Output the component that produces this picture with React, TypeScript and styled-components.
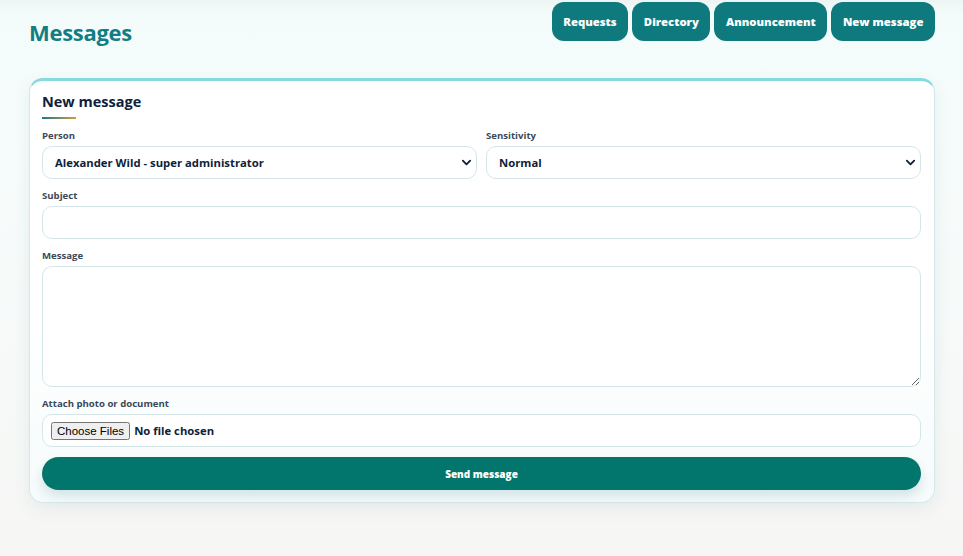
import styled, { createGlobalStyle } from 'styled-components';

const GlobalStyle = createGlobalStyle`
  html, body {
    margin: 0;
    padding: 0;
  }
  body {
    min-height: 556px;
    font-family: 'Open Sans', 'Noto Sans', sans-serif;
    background: linear-gradient(180deg, #ecf5f4 0px, #f3fbfb 14px, #f6fcfc 120px, #f6f7f5 556px);
    color: #0f1e3a;
  }
`;

const Page = styled.div`
  padding: 0 28px 0 29px;
  box-sizing: border-box;
  width: 963px;
  min-height: 556px;
`;

const Header = styled.div`
  display: flex;
  justify-content: space-between;
  align-items: flex-start;
  height: 78px;
`;

const Title = styled.h1`
  margin: 17px 0 0;
  font-size: 22px;
  font-weight: 700;
  color: #137d84;
  letter-spacing: -0.3px;
`;

const Actions = styled.div`
  display: flex;
  gap: 4px;
  padding-top: 2px;
`;

const ActionButton = styled.button`
  height: 39px;
  padding: 0 11.6px;
  border: none;
  border-radius: 12px;
  background: #0e7a7e;
  color: #fff;
  font-family: inherit;
  font-size: 11.3px;
  font-weight: 800;
  cursor: pointer;
`;

const Card = styled.div`
  box-sizing: border-box;
  border: 1px solid #d6e7e9;
  border-top: 3px solid #85dadf;
  border-radius: 14px;
  background: linear-gradient(180deg, #ffffff 0%, #ffffff 55%, #f6fbfc 100%);
  box-shadow: 0 6px 18px rgba(30, 80, 90, 0.08);
  padding: 11px 13px 12px 12px;
`;

const CardTitle = styled.h2`
  margin: 0;
  font-size: 14.5px;
  font-weight: 700;
  color: #0f1e3a;
  line-height: 20px;
`;

const TitleBar = styled.div`
  width: 34px;
  height: 2px;
  margin: 5px 0 10px;
  background: linear-gradient(90deg, #197e80, #d39a3e);
`;

const Form = styled.div`
  display: flex;
  flex-direction: column;
  gap: 10px;
`;

const Row = styled.div`
  display: grid;
  grid-template-columns: 1fr 1fr;
  gap: 9px;
`;

const Field = styled.label`
  display: flex;
  flex-direction: column;
  gap: 4px;
`;

const Label = styled.span`
  font-size: 9.6px;
  font-weight: 700;
  line-height: 13px;
  color: #3c4859;
`;

const SelectWrap = styled.div`
  position: relative;
`;

const inputBase = `
  box-sizing: border-box;
  width: 100%;
  border: 1px solid #d5e6e8;
  border-radius: 10px;
  background: #fff;
  font-family: inherit;
  font-size: 11.3px;
  font-weight: 700;
  color: #0f1e3a;
  outline: none;
`;

const Select = styled.select`
  ${inputBase}
  height: 33px;
  padding: 0 30px 0 12px;
  appearance: none;
`;

const Chevron = styled.svg`
  position: absolute;
  right: 5px;
  top: 11px;
  pointer-events: none;
`;

const TextInput = styled.input`
  ${inputBase}
  height: 33px;
  padding: 0 12px;
`;

const TextArea = styled.textarea`
  ${inputBase}
  height: 121px;
  padding: 8px 12px;
  resize: vertical;
  display: block;
`;

const FileBox = styled.div`
  ${inputBase}
  height: 33px;
  display: flex;
  align-items: center;
  padding: 0 8px;

  input {
    font-family: inherit;
    font-size: 11.3px;
    font-weight: 700;
    color: #0f1e3a;
  }

  input::file-selector-button {
    font-family: 'Liberation Sans', Arial, sans-serif;
    font-size: 11.5px;
    font-weight: 400;
    padding: 1px 4px;
    margin-right: 4px;
  }
`;

const SendButton = styled.button`
  height: 33px;
  border: none;
  border-radius: 17px;
  background: #02766c;
  color: #fff;
  font-family: inherit;
  font-size: 10px;
  font-weight: 800;
  box-shadow: 0 6px 12px rgba(2, 90, 90, 0.15);
  cursor: pointer;
`;

const ChevronIcon = () => (
  <Chevron width="11" height="11" viewBox="0 0 12 12">
    <path d="M2 4l4 4 4-4" fill="none" stroke="#0f1e3a" strokeWidth="2" strokeLinecap="round" strokeLinejoin="round" />
  </Chevron>
);

export default function App() {
  return (
    <>
      <GlobalStyle />
      <Page>
        <Header>
          <Title>Messages</Title>
          <Actions>
            <ActionButton>Requests</ActionButton>
            <ActionButton>Directory</ActionButton>
            <ActionButton>Announcement</ActionButton>
            <ActionButton>New message</ActionButton>
          </Actions>
        </Header>
        <Card>
          <CardTitle>New message</CardTitle>
          <TitleBar />
          <Form>
            <Row>
              <Field>
                <Label>Person</Label>
                <SelectWrap>
                  <Select defaultValue="1">
                    <option value="1">Alexander Wild - super administrator</option>
                  </Select>
                  <ChevronIcon />
                </SelectWrap>
              </Field>
              <Field>
                <Label>Sensitivity</Label>
                <SelectWrap>
                  <Select defaultValue="normal">
                    <option value="normal">Normal</option>
                    <option value="high">High</option>
                  </Select>
                  <ChevronIcon />
                </SelectWrap>
              </Field>
            </Row>
            <Field>
              <Label>Subject</Label>
              <TextInput type="text" />
            </Field>
            <Field>
              <Label>Message</Label>
              <TextArea />
            </Field>
            <Field>
              <Label>Attach photo or document</Label>
              <FileBox>
                <input type="file" multiple />
              </FileBox>
            </Field>
            <SendButton>Send message</SendButton>
          </Form>
        </Card>
      </Page>
    </>
  );
}
